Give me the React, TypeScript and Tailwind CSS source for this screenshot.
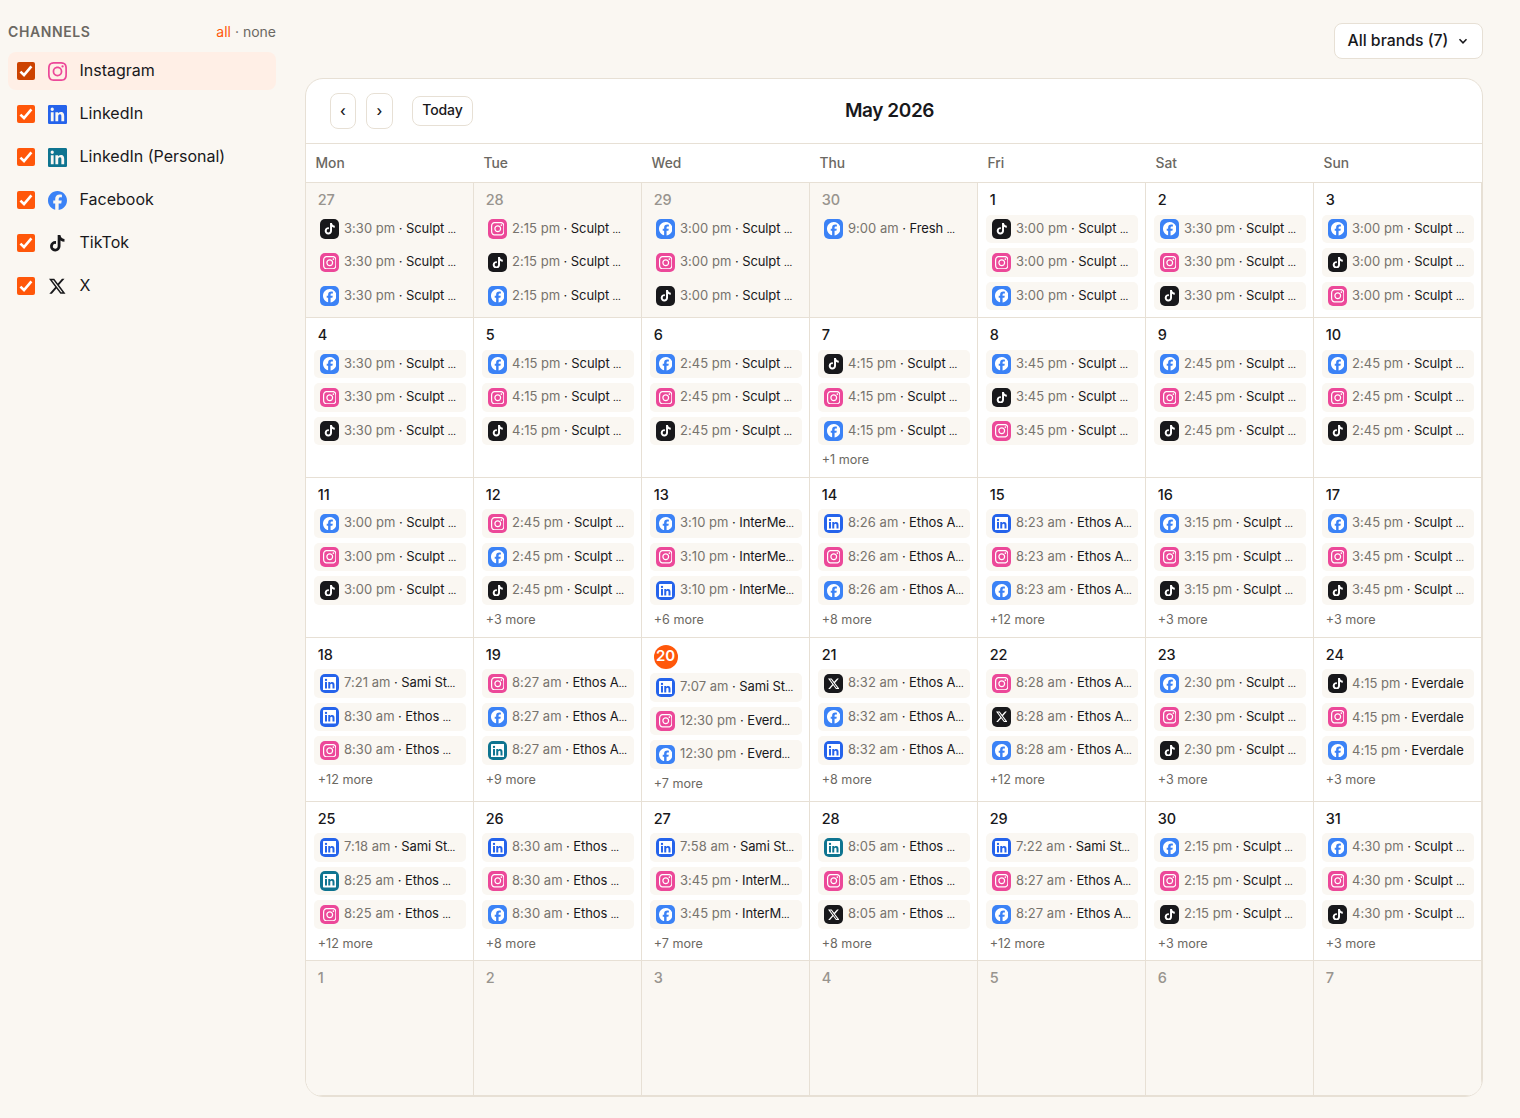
import clsx from 'clsx';
import { FaFacebook, FaTiktok } from 'react-icons/fa6';
import { SiInstagram, SiX } from 'react-icons/si';

type Channel = 'ig' | 'li' | 'lp' | 'fb' | 'tt' | 'x';

type Post = [channel: Channel, time: string, title: string];

type Day = {
  date: number;
  posts?: Post[];
  more?: number;
  outside?: boolean;
  today?: boolean;
};

const CHANNELS: { id: Channel; label: string }[] = [
  { id: 'ig', label: 'Instagram' },
  { id: 'li', label: 'LinkedIn' },
  { id: 'lp', label: 'LinkedIn (Personal)' },
  { id: 'fb', label: 'Facebook' },
  { id: 'tt', label: 'TikTok' },
  { id: 'x', label: 'X' },
];

const WEEKDAYS = ['Mon', 'Tue', 'Wed', 'Thu', 'Fri', 'Sat', 'Sun'];

const sameTime = (time: string, title: string, channels: Channel[]): Post[] =>
  channels.map((channel) => [channel, time, title]);

const WEEKS: { height: string; days: Day[] }[] = [
  {
    height: 'h-[135px]',
    days: [
      { date: 27, outside: true, posts: sameTime('3:30 pm', 'Sculpt …', ['tt', 'ig', 'fb']) },
      { date: 28, outside: true, posts: sameTime('2:15 pm', 'Sculpt …', ['ig', 'tt', 'fb']) },
      { date: 29, outside: true, posts: sameTime('3:00 pm', 'Sculpt …', ['fb', 'ig', 'tt']) },
      { date: 30, outside: true, posts: sameTime('9:00 am', 'Fresh …', ['fb']) },
      { date: 1, posts: sameTime('3:00 pm', 'Sculpt …', ['tt', 'ig', 'fb']) },
      { date: 2, posts: sameTime('3:30 pm', 'Sculpt …', ['fb', 'ig', 'tt']) },
      { date: 3, posts: sameTime('3:00 pm', 'Sculpt …', ['fb', 'tt', 'ig']) },
    ],
  },
  {
    height: 'h-[159.6px]',
    days: [
      { date: 4, posts: sameTime('3:30 pm', 'Sculpt …', ['fb', 'ig', 'tt']) },
      { date: 5, posts: sameTime('4:15 pm', 'Sculpt …', ['fb', 'ig', 'tt']) },
      { date: 6, posts: sameTime('2:45 pm', 'Sculpt …', ['fb', 'ig', 'tt']) },
      { date: 7, more: 1, posts: sameTime('4:15 pm', 'Sculpt …', ['tt', 'ig', 'fb']) },
      { date: 8, posts: sameTime('3:45 pm', 'Sculpt …', ['fb', 'tt', 'ig']) },
      { date: 9, posts: sameTime('2:45 pm', 'Sculpt …', ['fb', 'ig', 'tt']) },
      { date: 10, posts: sameTime('2:45 pm', 'Sculpt …', ['fb', 'ig', 'tt']) },
    ],
  },
  {
    height: 'h-[160px]',
    days: [
      { date: 11, posts: sameTime('3:00 pm', 'Sculpt …', ['fb', 'ig', 'tt']) },
      { date: 12, more: 3, posts: sameTime('2:45 pm', 'Sculpt …', ['ig', 'fb', 'tt']) },
      { date: 13, more: 6, posts: sameTime('3:10 pm', 'InterMe…', ['fb', 'ig', 'li']) },
      { date: 14, more: 8, posts: sameTime('8:26 am', 'Ethos A…', ['li', 'ig', 'fb']) },
      { date: 15, more: 12, posts: sameTime('8:23 am', 'Ethos A…', ['li', 'ig', 'fb']) },
      { date: 16, more: 3, posts: sameTime('3:15 pm', 'Sculpt …', ['fb', 'ig', 'tt']) },
      { date: 17, more: 3, posts: sameTime('3:45 pm', 'Sculpt …', ['fb', 'ig', 'tt']) },
    ],
  },
  {
    height: 'h-[164px]',
    days: [
      {
        date: 18,
        more: 12,
        posts: [
          ['li', '7:21 am', 'Sami St…'],
          ['li', '8:30 am', 'Ethos …'],
          ['ig', '8:30 am', 'Ethos …'],
        ],
      },
      { date: 19, more: 9, posts: sameTime('8:27 am', 'Ethos A…', ['ig', 'fb', 'lp']) },
      {
        date: 20,
        today: true,
        more: 7,
        posts: [
          ['li', '7:07 am', 'Sami St…'],
          ['ig', '12:30 pm', 'Everd…'],
          ['fb', '12:30 pm', 'Everd…'],
        ],
      },
      { date: 21, more: 8, posts: sameTime('8:32 am', 'Ethos A…', ['x', 'fb', 'li']) },
      { date: 22, more: 12, posts: sameTime('8:28 am', 'Ethos A…', ['ig', 'x', 'fb']) },
      { date: 23, more: 3, posts: sameTime('2:30 pm', 'Sculpt …', ['fb', 'ig', 'tt']) },
      { date: 24, more: 3, posts: sameTime('4:15 pm', 'Everdale', ['tt', 'ig', 'fb']) },
    ],
  },
  {
    height: 'h-[159.4px]',
    days: [
      {
        date: 25,
        more: 12,
        posts: [
          ['li', '7:18 am', 'Sami St…'],
          ['lp', '8:25 am', 'Ethos …'],
          ['ig', '8:25 am', 'Ethos …'],
        ],
      },
      { date: 26, more: 8, posts: sameTime('8:30 am', 'Ethos …', ['li', 'ig', 'fb']) },
      {
        date: 27,
        more: 7,
        posts: [
          ['li', '7:58 am', 'Sami St…'],
          ['ig', '3:45 pm', 'InterM…'],
          ['fb', '3:45 pm', 'InterM…'],
        ],
      },
      { date: 28, more: 8, posts: sameTime('8:05 am', 'Ethos …', ['lp', 'ig', 'x']) },
      {
        date: 29,
        more: 12,
        posts: [
          ['li', '7:22 am', 'Sami St…'],
          ['ig', '8:27 am', 'Ethos A…'],
          ['fb', '8:27 am', 'Ethos A…'],
        ],
      },
      { date: 30, more: 3, posts: sameTime('2:15 pm', 'Sculpt …', ['fb', 'ig', 'tt']) },
      { date: 31, more: 3, posts: sameTime('4:30 pm', 'Sculpt …', ['fb', 'ig', 'tt']) },
    ],
  },
  {
    height: 'h-[135px]',
    days: [1, 2, 3, 4, 5, 6, 7].map((date) => ({ date, outside: true })),
  },
];

const TEXT_COLORS: Record<Channel, string> = {
  ig: 'text-[#ec4899]',
  li: 'text-[#2563eb]',
  lp: 'text-[#0e7490]',
  fb: 'text-[#3b82f6]',
  tt: 'text-zinc-900',
  x: 'text-zinc-900',
};

const TILE_COLORS: Record<Channel, string> = {
  ig: 'bg-[#ec4899]',
  li: 'bg-[#2563eb]',
  lp: 'bg-[#0e7490]',
  fb: 'bg-[#3b82f6]',
  tt: 'bg-zinc-900',
  x: 'bg-zinc-900',
};

const LinkedInIcon = ({ className }: { className?: string }) => (
  <svg viewBox="0 0 24 24" fill="currentColor" className={className}>
    <path d="M20.45 20.45h-3.56v-5.57c0-1.33-.03-3.04-1.85-3.04-1.85 0-2.14 1.45-2.14 2.94v5.67H9.35V9h3.41v1.56h.05c.48-.9 1.64-1.85 3.37-1.85 3.6 0 4.27 2.37 4.27 5.46v6.28zM5.34 7.43a2.06 2.06 0 1 1 0-4.13 2.06 2.06 0 0 1 0 4.13zm1.78 13.02H3.56V9h3.56v11.45zM22.23 0H1.77C.79 0 0 .77 0 1.73v20.54C0 23.23.79 24 1.77 24h20.46c.97 0 1.77-.77 1.77-1.73V1.73C24 .77 23.2 0 22.22 0z" />
  </svg>
);

const ChannelIcon = ({ channel, small }: { channel: Channel; small?: boolean }) => {
  const full = small ? 'size-[13.5px]' : 'size-[19px]';
  const inner = small ? 'size-[11.5px]' : 'size-[16.5px]';

  if (channel === 'ig') return <SiInstagram className={full} />;
  if (channel === 'fb') return <FaFacebook className={full} />;
  if (channel === 'tt') return <FaTiktok className={inner} />;
  if (channel === 'x') return <SiX className={inner} />;
  return <LinkedInIcon className={full} />;
};

const Sidebar = () => (
  <aside className="w-[268px] shrink-0">
    <div className="flex h-5 items-center justify-between pb-px text-[14px]">
      <h2 className="font-semibold tracking-[0.6px] text-[#6b6862]">CHANNELS</h2>
      <span className="text-[#6b6862]">
        <button className="text-[#ff570a]">all</button> · <button>none</button>
      </span>
    </div>

    <div className="mt-[10px] flex flex-col gap-[5.1px]">
      {CHANNELS.map(({ id, label }, index) => (
        <label
          key={id}
          className={clsx(
            'flex h-[38px] items-center rounded-lg pl-[9px]',
            index === 0 && 'bg-[#ffefe6]',
          )}
        >
          <span
            className={clsx(
              'flex size-[18px] items-center justify-center rounded-[2px]',
              index === 0 ? 'bg-[#cc4200]' : 'bg-[#ff570a]',
            )}
          >
            <svg viewBox="0 0 18 18" className="size-[18px]" fill="none" stroke="#fff" strokeWidth="2.6">
              <path d="M3.4 9.6 7 13 14.4 4.4" />
            </svg>
          </span>
          <span className={clsx('ml-[13px] flex w-[19px] justify-center', TEXT_COLORS[id])}>
            <ChannelIcon channel={id} />
          </span>
          <span className="ml-[12.5px] pb-[2px] text-[16px] text-zinc-900">{label}</span>
        </label>
      ))}
    </div>
  </aside>
);

const PostChip = ({ post: [channel, time, title] }: { post: Post }) => {
  const clipped = title.endsWith('…');

  return (
    <div className="flex h-[28.5px] items-center overflow-hidden rounded-[5px] bg-[#faf7f2] pl-[6.2px]">
      <span
        className={clsx(
          'flex size-[19.5px] shrink-0 items-center justify-center rounded-[5px] text-white',
          TILE_COLORS[channel],
        )}
      >
        <ChannelIcon channel={channel} small />
      </span>
      <span className="ml-[4.8px] pb-[0.2px] text-[13px] leading-5 whitespace-nowrap text-zinc-900">
        <span className="tracking-[0.03px] text-[#77736d]">{time}</span>
        <span className="tracking-[-0.1px]">
          {' · '}
          {clipped ? title.slice(0, -1) : title}
          {clipped && <span className="text-[9.5px]">…</span>}
        </span>
      </span>
    </div>
  );
};

const DayCell = ({ day: { date, posts = [], more, outside, today } }: { day: Day }) => (
  <div
    className={clsx(
      'border-r border-b border-[#e7e0d5] px-[7.5px] pt-[7.1px]',
      outside && 'bg-[#faf7f2]',
    )}
  >
    {today ? (
      <span className="ml-1 flex size-6 items-center justify-center rounded-full bg-[#ff570a] pb-px text-[15px] font-semibold text-white">
        {date}
      </span>
    ) : (
      <span
        className={clsx(
          'ml-[4.2px] flex h-[20px] items-center pb-[0.5px] text-[14.5px] font-medium',
          outside ? 'text-[#98948e]' : 'text-zinc-900',
        )}
      >
        {date}
      </span>
    )}
    <div className="mt-[4.5px] flex flex-col gap-[5px]">
      {posts.map((post, index) => (
        <PostChip key={index} post={post} />
      ))}
    </div>
    {more && <div className="mt-[4.9px] ml-[4.2px] text-[12.6px] leading-5 text-[#6b6862]">+{more} more</div>}
  </div>
);

const Calendar = () => (
  <section className="overflow-hidden rounded-[18px] border border-[#e7e0d5] bg-white">
    <header className="grid h-[65px] grid-cols-3 items-center border-b border-[#e7e0d5] px-6">
      <div className="flex items-center">
        <button className="h-9 w-[26px] rounded-lg border border-[#e7e0d5] text-[14.5px] font-medium">‹</button>
        <button className="ml-[10px] h-9 w-[27px] rounded-lg border border-[#e7e0d5] text-[14.5px] font-medium">›</button>
        <button className="ml-[19px] h-[30px] w-[61px] rounded-lg border border-[#e7e0d5] pb-[3px] text-[14px] font-medium tracking-[-0.1px]">
          Today
        </button>
      </div>
      <h1 className="pr-[9px] text-center text-[19px] font-semibold tracking-[-0.4px]">May 2026</h1>
    </header>

    <div className="grid h-[39px] grid-cols-7 items-center border-b border-[#e7e0d5]">
      {WEEKDAYS.map((weekday) => (
        <span key={weekday} className="pl-[9.5px] text-[13.8px] font-medium text-[#6b6862]">
          {weekday}
        </span>
      ))}
    </div>

    {WEEKS.map(({ height, days }, index) => (
      <div key={index} className={clsx('grid grid-cols-7', height)}>
        {days.map((day) => (
          <DayCell key={day.date} day={day} />
        ))}
      </div>
    ))}
  </section>
);

const App = () => (
  <div className="flex h-[1118px] gap-[29px] overflow-hidden bg-[#faf7f2] pt-[22px] pl-2 font-['Inter',sans-serif] text-zinc-900">
    <Sidebar />
    <main className="w-[1178px] pt-px">
      <div className="flex justify-end">
        <button className="flex h-9 w-[149px] items-center justify-between rounded-lg border border-[#e7e0d5] bg-white pr-[14px] pl-[12.5px] text-[15.8px] font-medium">
          All brands (7)
          <svg viewBox="0 0 10 10" className="size-[10px]" fill="none" stroke="currentColor" strokeWidth="1.5">
            <path d="M1.5 3.2 5 6.8 8.5 3.2" />
          </svg>
        </button>
      </div>
      <div className="mt-[19px]">
        <Calendar />
      </div>
    </main>
  </div>
);

export default App;
